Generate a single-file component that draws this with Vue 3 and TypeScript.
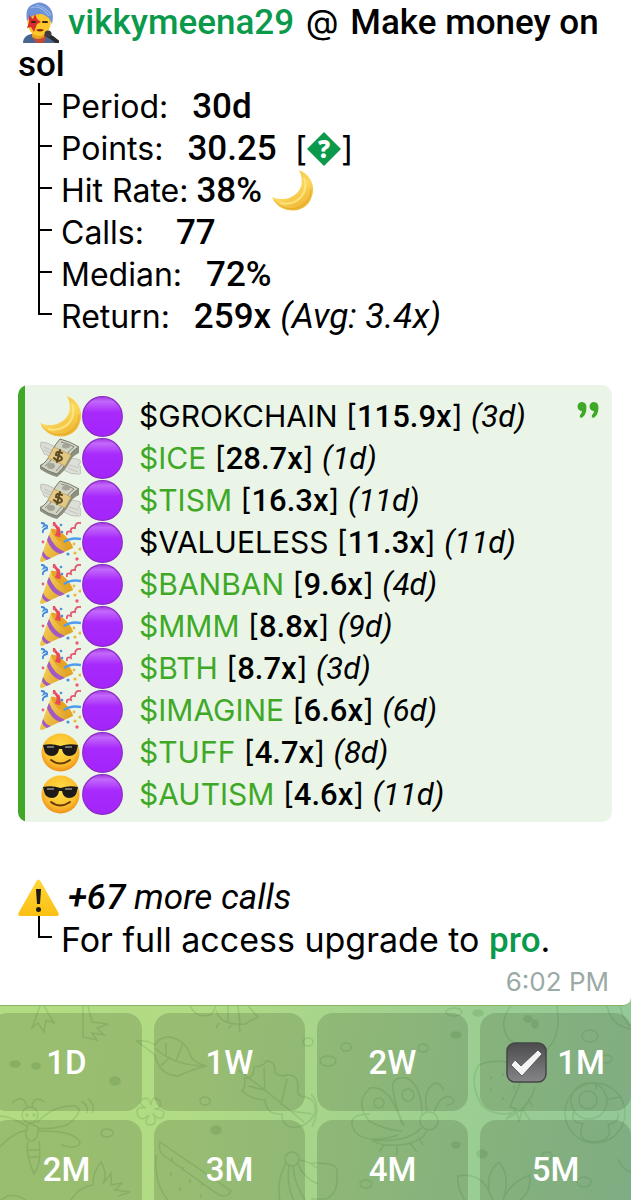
<script setup lang="ts">
interface Stat {
  label: string
  gap: 'one' | 'three' | 'four'
  value: string
  kind?: 'points' | 'rate' | 'return'
}

interface Call {
  mood: 'moon' | 'money' | 'party' | 'cool'
  token: string
  gain: string
  age: string
  linked: boolean
}

const stats: Stat[] = [
  { label: 'Period:', gap: 'three', value: '30d' },
  { label: 'Points:', gap: 'three', value: '30.25', kind: 'points' },
  { label: 'Hit Rate:', gap: 'one', value: '38%', kind: 'rate' },
  { label: 'Calls:', gap: 'four', value: '77' },
  { label: 'Median:', gap: 'three', value: '72%' },
  { label: 'Return:', gap: 'three', value: '259x', kind: 'return' },
]

const calls: Call[] = [
  { mood: 'moon', token: '$GROKCHAIN', gain: '115.9x', age: '3d', linked: false },
  { mood: 'money', token: '$ICE', gain: '28.7x', age: '1d', linked: true },
  { mood: 'money', token: '$TISM', gain: '16.3x', age: '11d', linked: true },
  { mood: 'party', token: '$VALUELESS', gain: '11.3x', age: '11d', linked: false },
  { mood: 'party', token: '$BANBAN', gain: '9.6x', age: '4d', linked: true },
  { mood: 'party', token: '$MMM', gain: '8.8x', age: '9d', linked: true },
  { mood: 'party', token: '$BTH', gain: '8.7x', age: '3d', linked: true },
  { mood: 'party', token: '$IMAGINE', gain: '6.6x', age: '6d', linked: true },
  { mood: 'cool', token: '$TUFF', gain: '4.7x', age: '8d', linked: true },
  { mood: 'cool', token: '$AUTISM', gain: '4.6x', age: '11d', linked: true },
]

const groupWords = ['Make', 'money', 'on', 'sol']
const periods = ['1D', '1W', '2W', '1M', '2M', '3M', '4M', '5M']
const selected = '1M'
</script>

<template>
  <main class="chat">
    <svg class="sprites" aria-hidden="true">
      <defs>
        <linearGradient id="g-moon" x1="0" y1="0" x2="0.6" y2="1">
          <stop offset="0" stop-color="#f3bf3c" />
          <stop offset="0.6" stop-color="#fbd75c" />
          <stop offset="1" stop-color="#eeb732" />
        </linearGradient>
        <linearGradient id="g-purple" x1="0" y1="0" x2="0" y2="1">
          <stop offset="0" stop-color="#a63ae6" />
          <stop offset="0.12" stop-color="#c268fb" />
          <stop offset="0.4" stop-color="#a829fb" />
          <stop offset="1" stop-color="#a425fb" />
        </linearGradient>
        <linearGradient id="g-cone" x1="0" y1="0" x2="1" y2="0.6">
          <stop offset="0" stop-color="#fbe06a" />
          <stop offset="1" stop-color="#dd9a20" />
        </linearGradient>
        <radialGradient id="g-face" cx="0.5" cy="0.4" r="0.6">
          <stop offset="0" stop-color="#ffe04a" />
          <stop offset="0.7" stop-color="#fcc02e" />
          <stop offset="1" stop-color="#ee8f1c" />
        </radialGradient>
        <linearGradient id="g-warn" x1="0" y1="0" x2="0" y2="1">
          <stop offset="0" stop-color="#ffd83c" />
          <stop offset="1" stop-color="#fbbf12" />
        </linearGradient>
        <linearGradient id="g-check" x1="0" y1="0" x2="0" y2="1">
          <stop offset="0" stop-color="#4c4c4e" />
          <stop offset="1" stop-color="#858587" />
        </linearGradient>
      </defs>
      <symbol id="i-moon" viewBox="0 0 41 41">
        <path d="M27 0C37 4 42 13 41 22C39 34 31 40.500 21 40.500C11 40.500 4 36 0 27C9 31 19 29 25 23C31 17 31 8 27 0Z" fill="url(#g-moon)" />
        <path d="M2 30C8 38 18 40 25 38C34 35 39 28 39 19" fill="none" stroke="#dfa02a" stroke-width="1" opacity="0.7" />
        <path d="M32 8C36 18 31 28 22 32C17 34 12 34 8 33" fill="none" stroke="#ffe88a" stroke-width="2" opacity="0.8" />
      </symbol>
      <symbol id="i-circle" viewBox="0 0 41 41">
        <circle cx="20.500" cy="20.500" r="19.800" fill="url(#g-purple)" stroke="#8b2ac4" stroke-width="1.200" />
      </symbol>
      <symbol id="i-money" viewBox="0 0 41 41">
        <path d="M1 4Q8 4 15 9L16 17Q10 20 7 17Q3 17 3 13Q-1 9 1 4Z" fill="#dcdcd6" stroke="#b7b8b2" stroke-width="0.800" />
        <path d="M27 24Q31 18 40 22Q42 25 38 27Q43 29 40 32Q42 37 38 36Q31 37 24 32Z" fill="#dfdfd9" stroke="#b7b8b2" stroke-width="0.800" />
        <path d="M4 9l9 4M4 12l9 4M29 27l10 3M28 30l10 4" stroke="#bfc0ba" stroke-width="0.900" />
        <path d="M19 2Q29 4 39 9V15Q33 17 29 25T17 39Q9 37 0 31V27Q8 24 11 17T19 2Z" fill="#8d8f80" />
        <path d="M20 1Q29 3 39 9Q32 12 28 21T17 36Q8 34 0 28Q7 24 11 15T20 1Z" fill="#d1d3c5" stroke="#77796c" stroke-width="1" />
        <path d="M21 4Q28 5 34 9Q29 12 26 18M5 28Q10 25 13 19M16 33L24 24" fill="none" stroke="#85877a" stroke-width="1" />
        <ellipse cx="26" cy="8" rx="4" ry="2.500" fill="#a3a597" />
        <ellipse cx="11" cy="28" rx="4" ry="3" fill="#a3a597" />
        <path d="M14 9L31 17L25 28L8 20Z" fill="#e2c885" stroke="#bd9c50" stroke-width="0.700" />
        <path d="M22 15Q16 12 16 17Q22 18 22 21Q19 25 14 20M20 12L17 24" fill="none" stroke="#5d4a25" stroke-width="2" stroke-linecap="round" />
      </symbol>
      <symbol id="i-party" viewBox="0 0 41 41">
        <path d="M11 7C18 5 31 18 33 26L2 40C-1 40 0 37 1 35Z" fill="url(#g-cone)" />
        <path d="M7 18Q11 29 20 32L25 30Q14 26 9 13ZM3 29Q6 35 11 36L7 38Q3 36 2 33Z" fill="#a259c4" />
        <path d="M11 7C18 5 31 18 33 26C25 26 12 15 11 7Z" fill="#e7a526" />
        <path d="M16 14Q20 8 16 4Q13 1 15 0M19 15Q20 9 18 5" fill="none" stroke="#e9475b" stroke-width="2.600" />
        <path d="M24 20Q31 15 41 17" fill="none" stroke="#4f9cf0" stroke-width="2.600" />
        <path d="M1 1q5 0 3 3q4-2 3 2q-5 1-4 5" fill="none" stroke="#3f87df" stroke-width="1.800" />
        <path d="M27 13q-1-5 4-3q-1-5 4-4q0-6 6-5" fill="none" stroke="#e05a72" stroke-width="1.800" />
        <g fill="#ef5a78"><circle cx="3" cy="20" r="1.400" /><circle cx="14" cy="3" r="1.300" /><circle cx="37" cy="37" r="1.700" /></g>
        <g fill="#4c8fe6"><circle cx="21" cy="3" r="1.300" /><circle cx="22" cy="10" r="1.300" /><circle cx="28" cy="32" r="1.600" /></g>
        <g fill="#f0b53c"><circle cx="34" cy="22" r="1.400" /><circle cx="40" cy="27" r="1.600" /><circle cx="35" cy="31" r="1.600" /></g>
      </symbol>
      <symbol id="i-cool" viewBox="0 0 41 41">
        <circle cx="20.500" cy="20.500" r="19" fill="url(#g-face)" />
        <path d="M3 13Q12 11 20.500 14Q29 11 38 13L37 17Q36 24 29 24Q23 24 22 17H19Q18 24 12 24Q5 24 4 17Z" fill="#1c1b19" />
        <path d="M7 15l7 0M25 15l7 0" stroke="#77736a" stroke-width="2" />
        <path d="M11 28Q20 35 30 28" fill="none" stroke="#6a3a0c" stroke-width="2" stroke-linecap="round" />
      </symbol>
      <symbol id="i-singer" viewBox="0 0 41 41">
        <path d="M5 41Q5 34 13 32L27 32Q39 33 40 41Z" fill="#48668f" />
        <path d="M13 32L18 41H26L29 32Z" fill="#c04a3c" />
        <path d="M14 30H26V35Q20 39 14 35Z" fill="#e9a31e" />
        <path d="M9 14Q9 5 20 6Q33 6 33 19Q32 33 21 34Q9 33 9 14Z" fill="#fcc62c" />
        <path d="M9 19Q7 8 12 4Q22-3 30 4Q37 10 34 22Q31 14 24 12Q15 11 9 19Z" fill="#6d92d6" />
        <path d="M13 6Q22 2 31 14M18 3Q28 5 33 13" stroke="#9dbdf0" stroke-width="1.200" fill="none" />
        <path d="M11 13L15 17L17 12L19 17L23 20L19 22L16 30L13 25L9 26L11 20Z" fill="#da2c2c" />
        <path d="M14 20h3M25 20h4" stroke="#3e2410" stroke-width="2" stroke-linecap="round" />
        <path d="M18 28q4 3 8 0q-4-2-8 0" fill="#7b2815" />
        <path d="M30 33L41 41" stroke="#2b2a2c" stroke-width="4" />
        <circle cx="30" cy="32" r="3.500" fill="#3d3c3f" />
      </symbol>
      <symbol id="i-warning" viewBox="0 0 41 41">
        <path d="M18.500 4Q20.500 1 22.500 4L40.500 36Q41.500 39 38.500 39H2.500Q-0.500 39 0.500 36Z" fill="url(#g-warn)" />
        <path d="M18 12H23L22 27H19Z" fill="#1d1a12" />
        <circle cx="20.500" cy="32.500" r="2.500" fill="#1d1a12" />
      </symbol>
      <symbol id="i-check" viewBox="0 0 41 41">
        <rect x="1" y="1" width="39" height="39" rx="8" fill="url(#g-check)" stroke="#444547" stroke-width="1.500" />
        <path d="M5 23L9 18L15 24L32 8L36 12L16 34Z" fill="#f4f4f4" stroke="#3d3d3f" stroke-width="0.700" />
      </symbol>
    </svg>

    <article class="bubble">
      <h1 class="title">
        <svg class="emoji" role="img" aria-label="Singer"><use href="#i-singer" /></svg>
        <a class="name" href="#user">vikkymeena29</a> <span class="at">@</span>
        <template v-for="w in groupWords" :key="w">{{ ' ' }}<span>{{ w }}</span></template>
      </h1>

      <ul class="tree">
        <li v-for="s in stats" :key="s.label" class="branch">
          <span class="label">{{ s.label }}</span>
          <span class="value" :class="s.gap">{{ s.value }}</span>
          <span v-if="s.kind === 'points'" class="help">[<a href="#points" aria-label="About points"><svg class="diamond" viewBox="0 0 34 34" aria-hidden="true"><path d="M17 0L34 17L17 34L0 17Z" fill="#0b994b" /><text x="17" y="26" text-anchor="middle" class="mark">?</text></svg></a>]</span>
          <svg v-if="s.kind === 'rate'" class="emoji after" role="img" aria-label="Moon"><use href="#i-moon" /></svg>
          <em v-if="s.kind === 'return'" class="average">(Avg: 3.4x)</em>
        </li>
      </ul>

      <blockquote class="quote">
        <svg class="quote-mark" viewBox="0 0 22 16" aria-hidden="true">
          <path d="M5 0A4.500 4.500 0 0 0 5 9Q5 11 3 13Q2 15 4 16Q9 14 9.500 6Q9.500 0 5 0ZM17 0A4.500 4.500 0 0 0 17 9Q17 11 15 13Q14 15 16 16Q21 14 21.500 6Q21.500 0 17 0Z" fill="#3fa927" />
        </svg>
        <ol class="calls">
          <li v-for="c in calls" :key="c.token" class="call">
            <svg class="emoji" aria-hidden="true"><use :href="'#i-' + c.mood" /></svg>
            <svg class="emoji" aria-hidden="true"><use href="#i-circle" /></svg>
            <span class="entry">
              <a v-if="c.linked" class="token" href="#token">{{ c.token }}</a>
              <span v-else class="token">{{ c.token }}</span>
              [<b>{{ c.gain }}</b>] <em>({{ c.age }})</em>
            </span>
          </li>
        </ol>
      </blockquote>

      <p class="more">
        <svg class="emoji" role="img" aria-label="Warning"><use href="#i-warning" /></svg>
        <em class="count"><b>+67</b> more calls</em>
      </p>
      <p class="upgrade">For full access upgrade to <a class="pro" href="#pro">pro</a>.</p>
      <time class="time">6:02 PM</time>
    </article>

    <section class="keyboard">
      <svg class="doodles" viewBox="0 0 631 195" preserveAspectRatio="xMinYMin slice" aria-hidden="true">
        <path d="M40 0L32 22L38 17L44 26L46 14L54 17L44 0M83 0V31L97 34L92 27L104 29L97 22L108 18L92 16L88 0" />
        <path d="M190 0Q197 14 212 8L216 0M216 5Q221 20 245 18Q252 14 258 11L248 0M228 0V17M238 0L240 18M219 17L216 22M232 19L228 23M239 18L240 26" />
        <path d="M137 35Q148 34 155 39Q158 31 170 31Q187 35 191 51Q196 58 207 60Q190 64 178 70Q159 69 155 49ZM155 42Q174 60 207 60M166 49V37M176 55L183 37M170 51L161 60" />
        <path d="M242 85Q247 79 244 72Q254 74 254 61Q265 60 266 55Q276 55 275 67Q280 71 287 69Q299 68 298 83Q296 90 305 91Q317 93 315 108Q305 124 290 121Q281 117 282 108Q266 109 265 94Q252 94 242 85ZM238 64L265 84L304 116M265 84L264 62M281 99L287 73M265 84L248 80M290 105L313 108" />
        <circle cx="30" cy="109" r="8" /><circle cx="27" cy="109" r="1" /><circle cx="34" cy="109" r="1" />
        <path d="M27 101Q24 87 12 97M32 101Q34 88 44 96M29 117Q22 131 30 135Q39 135 38 121ZM37 117Q52 99 75 100Q86 104 67 119Q51 124 38 122M38 125Q74 124 80 136Q79 144 61 139M28 121Q13 111 0 110M28 124Q13 126 0 141M28 136Q25 147 34 168Q42 157 39 135M28 144H40M28 151H40M81 95Q89 99 87 107M88 93Q96 99 92 107" />
        <path d="M146 102Q136 96 143 93Q149 90 151 99Q152 88 160 95Q162 103 154 103Q168 103 162 112Q156 113 153 107Q159 119 149 119Q143 118 149 109Q139 118 137 106Q137 100 146 102Z" />
        <path d="M160 136L231 185Q228 192 219 189L163 149Q158 144 160 136ZM156 149Q154 180 169 195M172 151v4M183 161v4M171 166v4M190 173v4M202 176v4M180 181v4M201 188v4" />
        <circle cx="292" cy="153" r="7" /><path d="M286 157Q276 175 280 195M289 160Q286 178 294 195M293 160Q294 178 306 195M298 158Q303 172 318 178M299 154Q309 155 317 162M70 195Q80 180 93 179Q93 165 101 156Q108 168 103 178L111 167L111 179L122 177L115 184L130 186L118 190M0 195Q12 184 27 195" />
        <path d="M422 110Q422 80 407 72Q388 70 394 88Q395 100 404 120M402 118Q390 78 370 82Q354 96 369 115Q385 124 402 125M370 108Q344 108 355 126Q368 139 398 129M421 122Q408 137 372 134Q382 142 407 138Q423 134 427 125M427 106Q422 82 436 77Q442 78 443 84M434 107Q439 89 451 91Q459 97 447 99M419 132l4 7M410 137l7 9M397 140v9M384 139l-5 7" />
        <circle cx="429" cy="115" r="9" /><circle cx="379" cy="97" r="5" /><circle cx="408" cy="89" r="6" />
        <path d="M511 0Q498 16 508 32Q519 40 526 53M557 0Q561 28 550 40Q543 49 544 53M523 60Q495 51 479 59Q468 76 482 100Q497 113 522 104Q533 91 535 81M521 75L510 101L516 103L506 113L517 107L519 116L522 103L530 114M522 105L529 94L533 101M491 70v3M503 67v3M491 82v3M503 91v3M514 80v3M607 0Q611 20 631 23M620 0Q623 15 631 20" />
        <circle cx="595" cy="107" r="30" /><circle cx="589" cy="95" r="18" /><circle cx="588" cy="94" r="9" /><path d="M575 104Q568 116 583 118Q575 135 595 136Q614 134 608 119Q620 116 618 107M596 77V83M608 93L622 91" />
        <path d="M465 195Q456 179 458 170Q479 166 489 185Q486 166 499 156Q511 170 503 194Q509 177 530 169Q531 188 519 195M489 185L493 195M618 153Q623 164 631 166M311 157Q337 156 337 165Q339 188 326 193H311M311 88Q322 99 312 121" />
        <g><ellipse cx="308" cy="36" rx="5" ry="4" /><ellipse cx="205" cy="95" rx="5" ry="4" /><ellipse cx="107" cy="127" rx="6" ry="4" /><ellipse cx="346" cy="41" rx="5" ry="4" /><ellipse cx="328" cy="55" rx="8" ry="5" /><ellipse cx="423" cy="42" rx="5" ry="4" /><ellipse cx="590" cy="30" rx="8" ry="6" /><ellipse cx="606" cy="53" rx="6" ry="4" /><ellipse cx="366" cy="178" rx="6" ry="4" /><ellipse cx="584" cy="176" rx="7" ry="5" /><ellipse cx="454" cy="6" rx="8" ry="4" /><ellipse cx="547" cy="150" rx="5" ry="4" /></g>
        <g class="solid"><ellipse cx="15" cy="58" rx="5" ry="3" /><ellipse cx="36" cy="60" rx="4" ry="3" /><ellipse cx="115" cy="75" rx="5" ry="4" /><ellipse cx="216" cy="124" rx="5" ry="4" /><ellipse cx="456" cy="29" rx="5" ry="3" /><ellipse cx="478" cy="7" rx="5" ry="3" /><ellipse cx="456" cy="139" rx="4" ry="3" /><ellipse cx="482" cy="148" rx="5" ry="4" /><ellipse cx="528" cy="13" rx="4" ry="3" /><ellipse cx="535" cy="18" rx="3" ry="4" /></g>
      </svg>
      <div class="keys">
        <button v-for="p in periods" :key="p" type="button" class="key" :aria-pressed="p === selected">
          <svg v-if="p === selected" class="emoji" aria-hidden="true"><use href="#i-check" /></svg>
          <span>{{ p }}</span>
        </button>
      </div>
    </section>
  </main>
</template>

<style>
body {
  background: #fff;
}
</style>

<style scoped>
.chat {
  display: flex;
  flex-direction: column;
  height: 100vh;
  overflow: hidden;
  background: linear-gradient(100deg, #b4dd80 0%, #b1db84 45%, #9dcf90 75%, #92c79a 100%);
  color: #000;
  font-family: Inter, "Liberation Sans", sans-serif;
  font-size: 34px;
  font-weight: 400;
  line-height: 42px;
}
.sprites {
  position: absolute;
  width: 0;
  height: 0;
}
.bubble {
  flex: none;
  padding: 2px 19px 5px 18px;
  background: #fff;
  border-bottom: 1px solid #86b566;
  border-radius: 0 0 8px 0;
}
h1, p, ul, ol, blockquote {
  margin: 0;
  padding: 0;
  font-size: inherit;
}
ul, ol {
  list-style: none;
}
a {
  text-decoration: none;
}
em, b, .title, .value, .pro, .key {
  font-family: Roboto, sans-serif;
}
b, .title, .value, .pro {
  font-size: 35px;
  font-weight: 500;
}
.emoji {
  flex: none;
  width: 41px;
  height: 41px;
}
.title .emoji {
  float: left;
  margin-right: 9px;
}
.name, .pro {
  color: #0b994b;
}
.at {
  margin: 0 3px;
  font-family: Inter, sans-serif;
  font-size: 34px;
  font-weight: 400;
  line-height: 1;
}
.branch {
  position: relative;
  display: flex;
  height: 42px;
  padding-left: 43px;
  white-space: nowrap;
}
.label {
  font-size: 32px;
}
.branch::before, .upgrade::before {
  content: "";
  position: absolute;
  left: 20px;
  top: -3px;
  width: 12px;
  height: 20px;
  border-left: 2px solid #000;
  border-bottom: 2px solid #000;
}
.branch:not(:last-child)::after {
  content: "";
  position: absolute;
  left: 20px;
  top: 17px;
  width: 2px;
  height: 24px;
  background: #000;
}
.one {
  margin-left: 8px;
}
.three {
  margin-left: 24px;
}
.four {
  margin-left: 32px;
}
.help {
  display: flex;
  margin-left: 18px;
}
.diamond {
  display: block;
  width: 34px;
  height: 34px;
  margin-top: 4px;
  overflow: visible;
}
.mark {
  fill: #fff;
  font-family: "Open Sans", sans-serif;
  font-size: 24px;
  font-weight: 800;
}
.after {
  margin-left: 10px;
}
.average {
  margin-left: 9px;
  font-size: 35px;
}
.quote {
  position: relative;
  margin: 47px 0 55px;
  padding: 10px 0 7px 22px;
  border-radius: 10px;
  background: linear-gradient(to right, #3fa927 7px, #eaf5e8 7px);
  font-size: 30px;
}
.quote-mark {
  position: absolute;
  top: 17px;
  right: 13px;
  width: 22px;
  height: 16px;
}
.call {
  display: flex;
  gap: 1px;
  align-items: center;
  height: 42px;
}
.entry {
  margin-left: 15px;
  white-space: nowrap;
}
.entry b, .entry em {
  font-size: 31px;
}
a.token {
  color: #3fa927;
}
.more {
  display: flex;
  gap: 9px;
}
.count, .count b {
  font-size: 35px;
}
.upgrade {
  position: relative;
  height: 42px;
  padding-left: 43px;
}
.time {
  display: block;
  height: 39px;
  padding-right: 3px;
  color: #9aaaa4;
  font-size: 26px;
  text-align: right;
}
.keyboard {
  position: relative;
  flex: none;
  padding-top: 7px;
}
.doodles {
  position: absolute;
  top: 0;
  left: 0;
  width: 100%;
  height: 195px;
  fill: none;
  stroke: #4f8f45;
  stroke-width: 1.500;
  opacity: 0.220;
}
.solid {
  fill: #4f8f45;
}
.keys {
  position: relative;
  display: grid;
  grid-template-columns: repeat(4, 1fr);
  gap: 9px 12px;
  margin-left: -9px;
}
.key {
  display: flex;
  align-items: center;
  justify-content: center;
  gap: 10px;
  height: 98px;
  padding: 0;
  border: 0;
  border-radius: 16px;
  background: rgba(56, 68, 40, 0.200);
  color: #fff;
  font-size: 33px;
  font-weight: 500;
}
</style>
